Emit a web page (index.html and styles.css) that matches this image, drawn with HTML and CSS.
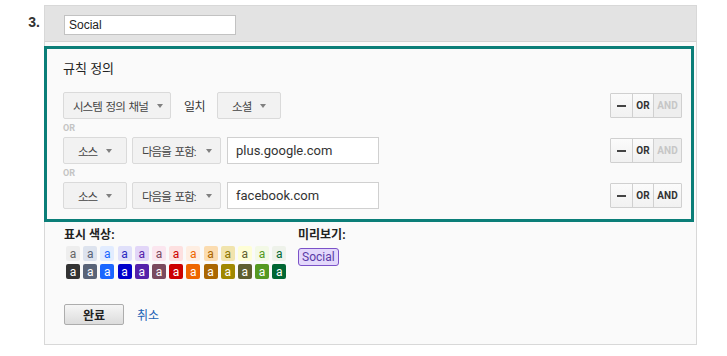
FILE: index.html
```html
<!DOCTYPE html>
<html lang="ko">
<head>
  <meta charset="UTF-8" />
  <title>채널 그룹 – 규칙</title>
  <link rel="stylesheet" href="styles.css">
</head>
<body>
  <div class="rule">
    <div class="num">3.</div>

    <div class="card">
      <div class="card-head">
        <input type="text" class="name-input" value="Social" />
      </div>

      <div class="card-body">
        <div class="rules">
          <div class="rules-title">규칙 정의</div>

          <div class="cond-row">
            <div class="select w-channel">시스템 정의 채널<span class="caret"></span></div>
            <span class="match">일치</span>
            <div class="select w-small">소셜<span class="caret"></span></div>
            <div class="ops">
              <button class="op"><span class="minus"></span></button>
              <button class="op">OR</button>
              <button class="op off">AND</button>
            </div>
          </div>

          <div class="or-label">OR</div>

          <div class="cond-row">
            <div class="select w-small">소스<span class="caret"></span></div>
            <div class="select w-match">다음을 포함:<span class="caret"></span></div>
            <input type="text" class="value-input" value="plus.google.com" />
            <div class="ops">
              <button class="op"><span class="minus"></span></button>
              <button class="op">OR</button>
              <button class="op off">AND</button>
            </div>
          </div>

          <div class="or-label">OR</div>

          <div class="cond-row">
            <div class="select w-small">소스<span class="caret"></span></div>
            <div class="select w-match">다음을 포함:<span class="caret"></span></div>
            <input type="text" class="value-input" value="facebook.com" />
            <div class="ops">
              <button class="op"><span class="minus"></span></button>
              <button class="op">OR</button>
              <button class="op">AND</button>
            </div>
          </div>
        </div>

        <div class="legend">
          <div class="legend-col">
            <div class="legend-label">표시 색상:</div>
            <div class="swatches">
              <span class="sw" style="background:#eeeeee;color:#666666">a</span>
              <span class="sw" style="background:#dde3ee;color:#5a6478">a</span>
              <span class="sw" style="background:#e2ecff;color:#1a66ff">a</span>
              <span class="sw" style="background:#e0e0fa;color:#2a2ac0">a</span>
              <span class="sw" style="background:#e2d6f8;color:#5522aa">a</span>
              <span class="sw" style="background:#fbe6ef;color:#7a4a5e">a</span>
              <span class="sw" style="background:#fde0e0;color:#cc0000">a</span>
              <span class="sw" style="background:#feeee2;color:#ee6600">a</span>
              <span class="sw" style="background:#fbdcb0;color:#aa6600">a</span>
              <span class="sw" style="background:#f1e4ad;color:#8a7400">a</span>
              <span class="sw" style="background:#fefed6;color:#5e5e30">a</span>
              <span class="sw" style="background:#f3f9e6;color:#559922">a</span>
              <span class="sw" style="background:#eef2ea;color:#006633">a</span>

              <span class="sw" style="background:#333333">a</span>
              <span class="sw" style="background:#5a6478">a</span>
              <span class="sw" style="background:#1a66ff">a</span>
              <span class="sw" style="background:#0000cc">a</span>
              <span class="sw" style="background:#5522aa">a</span>
              <span class="sw" style="background:#7a4a5e">a</span>
              <span class="sw" style="background:#cc0000">a</span>
              <span class="sw" style="background:#ee6600">a</span>
              <span class="sw" style="background:#aa6600">a</span>
              <span class="sw" style="background:#a08800">a</span>
              <span class="sw" style="background:#5e5e30">a</span>
              <span class="sw" style="background:#559922">a</span>
              <span class="sw" style="background:#006633">a</span>
            </div>
          </div>
          <div class="legend-col">
            <div class="legend-label">미리보기:</div>
            <span class="badge">Social</span>
          </div>
        </div>

        <div class="actions">
          <button class="done">완료</button>
          <a href="#" class="cancel">취소</a>
        </div>
      </div>
    </div>
  </div>
</body>
</html>
```

FILE: styles.css
```css
html, body {
  margin: 0;
  padding: 0;
  background: #ffffff;
  font-family: Roboto, 'Noto Sans CJK KR', sans-serif;
  color: #333;
}

.rule {
  display: flex;
  padding-top: 5px;
}

.num {
  width: 40px;
  padding-right: 4px;
  margin-top: 9px;
  text-align: right;
  font-family: 'Liberation Sans', sans-serif;
  font-size: 14px;
  line-height: 16px;
  font-weight: bold;
  color: #333;
}

.card {
  width: 653px;
}

.card-head {
  background: #e3e3e3;
  border: 1px solid #d8d8d8;
  border-bottom-color: #d2d2d2;
  padding: 9px 19px 6px;
}

.name-input {
  display: block;
  box-sizing: border-box;
  width: 172px;
  height: 20px;
  margin: 0;
  padding: 0 4px;
  border: 1px solid #c2c2c2;
  background: #fff;
  font-family: 'Liberation Sans', sans-serif;
  font-size: 12px;
  color: #222;
  outline: none;
}

.card-body {
  background: #fafafa;
  border: 1px solid #d8d8d8;
  border-top: none;
  padding: 4px 0 19px;
}

.rules {
  margin: 0 2px 0 -1px;
  border: 3px solid #0b7e78;
  padding: 10px 9px 10px 16px;
}

.rules-title {
  font-size: 13px;
  line-height: 20px;
  color: #222;
  margin-bottom: 13px;
}

.cond-row {
  display: flex;
  align-items: center;
  height: 27px;
}

.or-label {
  height: 18px;
  line-height: 18px;
  font-size: 9px;
  font-weight: bold;
  color: #c4c4c4;
}

.select {
  display: flex;
  align-items: center;
  box-sizing: border-box;
  height: 27px;
  padding: 0 8px 0 14px;
  border: 1px solid #dadada;
  border-radius: 2px;
  background: #f2f2f2;
  font-size: 11.5px;
  letter-spacing: -1px;
  word-spacing: 2px;
  color: #444;
  white-space: nowrap;
}

.caret {
  margin-left: auto;
  width: 0;
  height: 0;
  border-left: 3.5px solid transparent;
  border-right: 3.5px solid transparent;
  border-top: 4px solid #808080;
}

.w-channel {
  width: 108px;
  padding-left: 9px;
  padding-right: 7px;
}

.w-small {
  width: 64px;
  padding-right: 14px;
}

.w-match {
  width: 89px;
  margin-left: 5px;
  padding-left: 9px;
  padding-right: 8px;
}

.match {
  margin: 0 12px 0 13px;
  font-size: 12px;
  letter-spacing: -0.5px;
  color: #333;
}

.value-input {
  box-sizing: border-box;
  width: 152px;
  height: 27px;
  margin: 0 0 0 6px;
  padding: 0 8px;
  border: 1px solid #d0d0d0;
  background: #fff;
  font-family: Roboto, sans-serif;
  font-size: 13px;
  color: #333;
  outline: none;
}

.ops {
  margin-left: auto;
  display: flex;
  height: 23px;
  border: 1px solid #d0d0d0;
  border-radius: 1px;
}

.op {
  display: flex;
  align-items: center;
  justify-content: center;
  width: 21px;
  height: 100%;
  margin: 0;
  padding: 0;
  border: none;
  border-left: 1px solid #d0d0d0;
  background: linear-gradient(#fbfbfb, #f1f1f1);
  font-family: Roboto, sans-serif;
  font-size: 10px;
  font-weight: bold;
  color: #333;
}

.op:first-child {
  border-left: none;
}

.op:last-child {
  width: 28px;
}

.op.off {
  background: #eeeeee;
  color: #c6c6c6;
}

.minus {
  display: block;
  width: 9px;
  height: 2px;
  background: #444;
}

.legend {
  display: flex;
  padding: 5px 0 0 19px;
}

.legend-col:first-child {
  width: 234px;
}

.legend-label {
  font-size: 12px;
  line-height: 16px;
  font-weight: bold;
  color: #222;
}

.swatches {
  display: grid;
  grid-template-columns: repeat(13, 14px);
  grid-auto-rows: 15px;
  column-gap: 3.2px;
  row-gap: 3px;
  margin: 3px 0 0 2px;
}

.sw {
  display: flex;
  align-items: center;
  justify-content: center;
  border-radius: 2px;
  font-size: 12px;
  line-height: 1;
  color: #fff;
}

.badge {
  display: inline-block;
  margin-top: 5px;
  padding: 0 3px;
  height: 16px;
  line-height: 16px;
  border: 1px solid #7b52c8;
  border-radius: 3px;
  background: #e3d8fb;
  font-size: 12px;
  color: #5a3aa6;
}

.actions {
  display: flex;
  align-items: center;
  margin: 25px 0 0 19px;
}

.done {
  box-sizing: border-box;
  width: 60px;
  height: 21px;
  margin: 0;
  padding: 0;
  border: 1px solid #adadad;
  border-radius: 2px;
  background: linear-gradient(#f6f6f6, #dcdcdc);
  font-family: 'Noto Sans CJK KR', sans-serif;
  font-size: 12px;
  font-weight: bold;
  color: #222;
}

.cancel {
  margin-left: 13px;
  font-size: 12px;
  color: #1a62b5;
  text-decoration: none;
}
```
